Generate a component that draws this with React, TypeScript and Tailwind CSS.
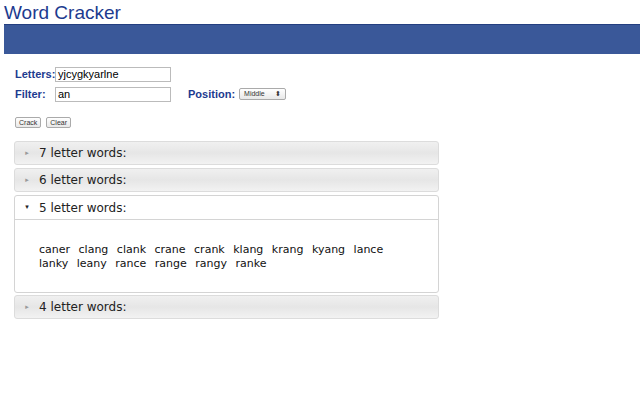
export default function App() {
  const hdr = "flex items-center h-[24px] border border-[#dcdcdc] rounded-[3px] bg-gradient-to-b from-[#f0f0f0] via-[#e6e6e6] to-[#f2f2f2] text-[12px] text-[#222]";
  const Closed = ({ n }: { n: number }) => (
    <div className={hdr + " mb-[3px]"}>
      <span className="w-[24px] text-center text-[7px] text-[#999]">▸</span>
      <span>{n} letter words:</span>
    </div>
  );
  return (
    <div className="w-[640px] h-[400px] bg-white relative" style={{ fontFamily: "Arial, 'Liberation Sans', sans-serif" }}>
      <div className="pl-[4px] pt-[3px] text-[19px] leading-[20px] text-[#1d3b8f]">Word Cracker</div>
      <div className="ml-[4px] mt-[1px] h-[30px] bg-[#3a5899] border-t border-[#243f80]" />
      <div className="pl-[15px] pt-[12px] text-[11px]">
        <div className="flex items-center h-[16px]">
          <span className="font-bold text-[#1d3b8f] w-[40px]">Letters:</span>
          <div className="w-[116px] h-[15px] border border-[#bbb] px-[2px] leading-[13px] text-[11px]">yjcygkyarlne</div>
        </div>
        <div className="flex items-center h-[16px] mt-[4px]">
          <span className="font-bold text-[#1d3b8f] w-[40px]">Filter:</span>
          <div className="w-[116px] h-[15px] border border-[#bbb] px-[2px] leading-[13px] text-[11px]">an</div>
          <span className="font-bold text-[#1d3b8f] ml-[17px]">Position:</span>
          <div className="ml-[4px] w-[47px] h-[12px] border border-[#aaa] rounded-[2px] bg-gradient-to-b from-white to-[#e8e8e8] flex items-center justify-between px-[4px] text-[7px] text-[#333]">
            <span>Middle</span><span>⬍</span>
          </div>
        </div>
        <div className="flex gap-[5px] mt-[15px]">
          <div className="h-[11px] px-[3px] border border-[#aaa] rounded-[2px] bg-gradient-to-b from-white to-[#e8e8e8] text-[7px] leading-[9px] text-[#333]">Crack</div>
          <div className="h-[11px] px-[3px] border border-[#aaa] rounded-[2px] bg-gradient-to-b from-white to-[#e8e8e8] text-[7px] leading-[9px] text-[#333]">Clear</div>
        </div>
      </div>
      <div className="ml-[14px] mt-[13px] w-[425px]" style={{ fontFamily: "'DejaVu Sans', Verdana, sans-serif" }}>
        <Closed n={7} />
        <Closed n={6} />
        <div className="border border-[#d4d4d4] rounded-[3px] mb-[2px]">
          <div className="flex items-center h-[24px] border-b border-[#d4d4d4] text-[12px] text-[#222]">
            <span className="w-[24px] text-center text-[7px]">▾</span>
            <span>5 letter words:</span>
          </div>
          <div className="h-[72px] pl-[24px] pt-[23px] text-[11px] leading-[14px] text-[#111] w-[370px] [word-spacing:5px]">
            caner clang clank crane crank klang krang kyang lance lanky leany rance range rangy ranke
          </div>
        </div>
        <Closed n={4} />
      </div>
    </div>
  );
}
